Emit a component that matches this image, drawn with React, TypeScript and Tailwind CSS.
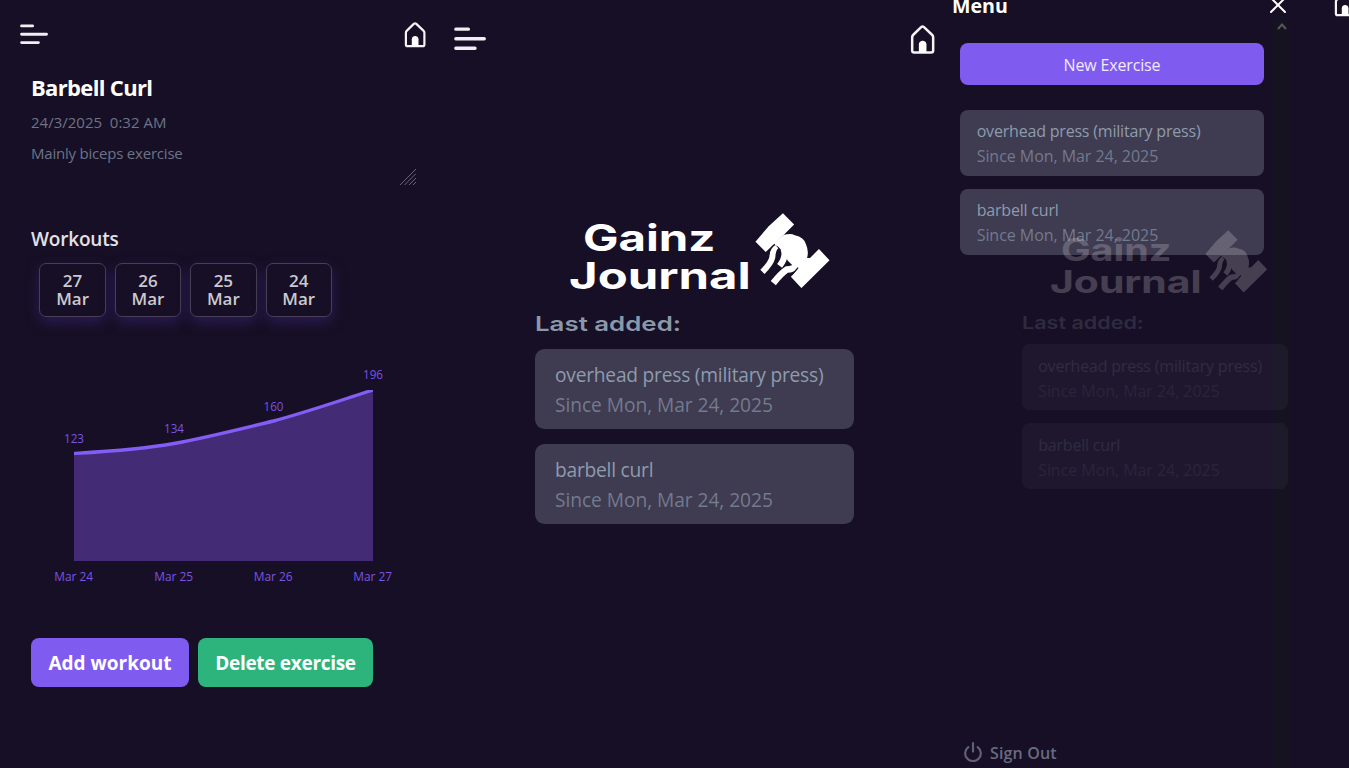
import React from "react";

const exercises = ["overhead press (military press)", "barbell curl"];
const workouts = ["27", "26", "25", "24"];

function HomeIcon({ className }: { className: string }) {
  return (
    <svg viewBox="0 0 22 26" fill="none" className={className}>
      <path
        d="M11 1.3Q11.6 1.3 12.3 1.9L19.4 8.6Q20.4 9.5 20.4 10.8V22.4Q20.4 24.2 18.6 24.2H3.7Q1.9 24.2 1.9 22.4V10.8Q1.9 9.5 2.9 8.6L9.8 1.9Q10.5 1.3 11 1.3Z"
        stroke="#f4f3f6"
        strokeWidth="2.2"
        strokeLinejoin="round"
      />
      <path d="M7.8 24.5V17.2C7.8 12.9 14.5 12.9 14.5 17.2V24.5Z" fill="#fff" />
    </svg>
  );
}

function MenuIcon({ className }: { className: string }) {
  return (
    <svg viewBox="0 0 28 21" fill="none" stroke="#f1eff3" strokeWidth="2.9" strokeLinecap="round" className={className}>
      <path d="M1.6 1.9H12.6M1.6 10.3H26.5M1.6 18.6H18.4" />
    </svg>
  );
}

function Dumbbell() {
  return (
    <svg viewBox="30 22 226 228" className="h-[3.77em] w-[3.75em]" fill="#fff">
      <path d="M114 23L148 57L117 88L62 140L31 109L71 62Z" />
      <path d="M84 116L117 88Q138 82 150 89Q178 94 184 117Q193 137 187 158L196 158L223 131L255 165L170 249L138 215L160 190L146 183L128 166L120 146L100 124Z" />
      <path d="M94 122Q83 132 82 156Q78 174 52 200" fill="none" stroke="#fff" strokeWidth="18" />
      <path d="M116 130Q126 154 104 182" fill="none" stroke="#fff" strokeWidth="19" />
      <path d="M160 180Q146 192 126 193Q110 203 85 234" fill="none" stroke="#fff" strokeWidth="20" />
      <path d="M90 117Q75 127 71 147M160 187L141 209" fill="none" stroke="#170f25" strokeWidth="4" />
    </svg>
  );
}

function ExerciseCard({ name }: { name: string }) {
  return (
    <div className="flex h-[3.98em] flex-col justify-center rounded-[0.47em] bg-[#3f3b51] px-[1em] pt-[0.05em] whitespace-nowrap">
      <div className="h-[1.5em] leading-[1.5em] text-[#8e9bad]">
        <span className="text-[0.96em] tracking-[-0.012em]">{name}</span>
      </div>
      <div className="h-[1.5em] leading-[1.5em] text-[#727a8d]">
        <span className="text-[0.96em] tracking-[-0.003em]">Since Mon, Mar 24, 2025</span>
      </div>
    </div>
  );
}

function HomeContent() {
  return (
    <div className="flex w-[15.97em] flex-col">
      <div className="flex h-[4.075em] items-start pl-[1.7em] font-['Inter',sans-serif] font-bold text-white">
        <div className="flex w-[9.3em] shrink-0 flex-col pt-[0.275em]">
          <div className="flex h-[1.9em] items-center pl-[0.7em]">
            <span className="origin-left scale-x-[1.28] text-[1.85em] leading-none">Gainz</span>
          </div>
          <div className="flex h-[1.9em] items-center">
            <span className="origin-left scale-x-[1.325] text-[1.85em] leading-none">Journal</span>
          </div>
        </div>
        <Dumbbell />
      </div>
      <div className="mt-[0.875em] flex h-[1.25em] items-center font-['Inter',sans-serif] font-semibold text-[#8b98aa]">
        <span className="origin-left scale-x-[1.28] text-[1.01em] leading-none">Last added:</span>
      </div>
      <div className="mt-[0.62em] flex flex-col gap-[0.77em]">
        {exercises.map((name) => (
          <ExerciseCard key={name} name={name} />
        ))}
      </div>
    </div>
  );
}

function Chart() {
  const pts = [
    { x: 74, v: "123", d: "Mar 24", ly: 92.6 },
    { x: 174, v: "134", d: "Mar 25", ly: 82.8 },
    { x: 273.5, v: "160", d: "Mar 26", ly: 60.8 },
    { x: 373, v: "196", d: "Mar 27", ly: 28.8 },
  ];
  return (
    <svg width="430" height="250" viewBox="0 0 430 250" className="block">
      <clipPath id="plot">
        <rect x="74" y="40" width="299" height="171" />
      </clipPath>
      <path d="M74 103.5C107 101.5 141 99.5 174 93.5C207 87.5 240 79 273.5 71C307 62 340 50.5 373 40V211H74Z" fill="#432b76" />
      <path
        d="M74 103.5C107 101.5 141 99.5 174 93.5C207 87.5 240 79 273.5 71C307 62 340 50.5 373 40"
        fill="none"
        stroke="#835df5"
        strokeWidth="3.4"
        clipPath="url(#plot)"
      />
      <g fill="#7a54e2" fontSize="12.6" textAnchor="middle" className="font-['Open_Sans',sans-serif]">
        {pts.map((p) => (
          <g key={p.d}>
            <text x={p.x} y={p.ly} textLength="20" lengthAdjust="spacingAndGlyphs">{p.v}</text>
            <text x={p.x - 0.3} y="230.8" textLength="39" lengthAdjust="spacingAndGlyphs">{p.d}</text>
          </g>
        ))}
      </g>
    </svg>
  );
}

function ExercisePanel() {
  return (
    <section className="flex w-[440px] shrink-0 flex-col">
      <div className="flex h-[75px] justify-between pt-[22px] pr-[14px] pl-5">
        <MenuIcon className="mt-[2px] h-[21px] w-7" />
        <HomeIcon className="h-[26px] w-[22px]" />
      </div>
      <div className="flex flex-col pl-[31px]">
        <h1 className="h-6 text-[22px] leading-6 font-bold tracking-[-0.03em] text-white">Barbell Curl</h1>
        <p className="mt-3 h-[22px] text-[15px] leading-[22px] whitespace-pre text-[#6c7486]">{"24/3/2025  0:32 AM"}</p>
        <div className="mt-[9px] flex h-[46px] w-[385px] justify-between">
          <p className="text-[15px] leading-[22px] tracking-[-0.014em] text-[#6c7486]">Mainly biceps exercise</p>
          <svg viewBox="0 0 16 16" className="mt-[27px] h-4 w-4" stroke="#77717c" strokeWidth="0.9">
            <path d="M0 16L16 0M4.5 16L16 4.5M9 16L16 9M13 16L16 13" />
          </svg>
        </div>
        <h2 className="mt-[39px] h-6 text-[19px] leading-6 font-semibold tracking-[-0.01em] text-[#e3e1e6]">Workouts</h2>
      </div>
      <div className="mt-[12px] flex gap-[9px] pl-[39.4px]">
        {workouts.map((day) => (
          <div
            key={day}
            className="flex h-[53.5px] w-[66.4px] flex-col items-center justify-center rounded-[7px] border border-[#464052] bg-[#170f25] text-[17px] leading-[18px] font-semibold text-[#cbc9cf] shadow-[0_5px_14px_-1px_#2f1d5c]"
          >
            <span>{day}</span>
            <span>Mar</span>
          </div>
        ))}
      </div>
      <div className="mt-[33.5px]">
        <Chart />
      </div>
      <div className="mt-[38px] flex h-[48.5px] gap-[9px] pl-[31px] text-[19px] font-bold whitespace-nowrap text-white">
        <button className="w-[158px] rounded-[8px] bg-[#805bf0] pt-px">Add workout</button>
        <button className="w-[175px] rounded-[8px] bg-[#2db47d] pt-px tracking-[-0.016em]">Delete exercise</button>
      </div>
    </section>
  );
}

function HomePanel() {
  return (
    <section className="flex w-[500px] shrink-0 flex-col">
      <div className="flex h-[213px] justify-between pt-[25px] pr-[5px] pl-[14px]">
        <MenuIcon className="mt-[2px] h-[24px] w-8" />
        <HomeIcon className="h-[29.5px] w-[25px]" />
      </div>
      <div className="pl-[95px] text-[20px]">
        <HomeContent />
      </div>
    </section>
  );
}

function SidebarPanel() {
  return (
    <section className="relative flex min-w-0 flex-1 overflow-hidden">
      <div className="absolute top-[20px] left-[333px] h-[748px] w-[17px] bg-[#15131f]" />
      <div className="relative flex w-[366px] shrink-0 flex-col">
        <div className="flex h-[43px] items-start justify-between pr-[20px] pl-[12px]">
          <h2 className="-mt-[6px] text-[19.6px] leading-6 font-bold text-white">Menu</h2>
          <div className="-mt-[3px] flex flex-col items-end">
            <svg viewBox="0 0 16 16" className="h-4 w-4" stroke="#fff" strokeWidth="2" strokeLinecap="round">
              <path d="M1 1L15 15M15 1L1 15" />
            </svg>
            <svg viewBox="0 0 10 7" className="mt-[10px] -mr-px h-[7px] w-[10px]" fill="none" stroke="#5a5560" strokeWidth="2">
              <path d="M1 6L5 1.5L9 6" />
            </svg>
          </div>
        </div>
        <div className="flex flex-1 flex-col pr-[42px] pb-[3px] pl-5">
          <button className="h-[41.5px] rounded-[8px] bg-[#805bf0] pt-[3px] text-[16px] tracking-[-0.01em] text-[#f0ebff]">New Exercise</button>
          <div className="mt-[25px] flex flex-col gap-[0.77em] text-[16.67px]">
            {exercises.map((name) => (
              <ExerciseCard key={name} name={name} />
            ))}
          </div>
          <div className="mt-auto flex items-center gap-[8px] pl-[4px] text-[16px] leading-6 font-semibold tracking-[0.01em] text-[#686b80]">
            <svg viewBox="0 0 18 20" className="-mt-[2px] h-5 w-[18px]" fill="none" stroke="#5f6075" strokeWidth="2.2" strokeLinecap="round">
              <path d="M9 1.2V9.6M4.3 5.1A7.8 7.8 0 1 0 13.7 5.1" />
            </svg>
            Sign Out
          </div>
        </div>
      </div>
      <div className="absolute top-[230.3px] left-[81.5px] text-[16.67px] opacity-20">
        <HomeContent />
      </div>
      <div className="absolute -top-[9px] left-[394px]">
        <HomeIcon className="h-[26px] w-[22px]" />
      </div>
    </section>
  );
}

export default function App() {
  return (
    <main className="flex h-[768px] w-[1349px] overflow-hidden bg-[#170f25] font-['Open_Sans','Noto_Sans',sans-serif]">
      <ExercisePanel />
      <HomePanel />
      <SidebarPanel />
    </main>
  );
}
